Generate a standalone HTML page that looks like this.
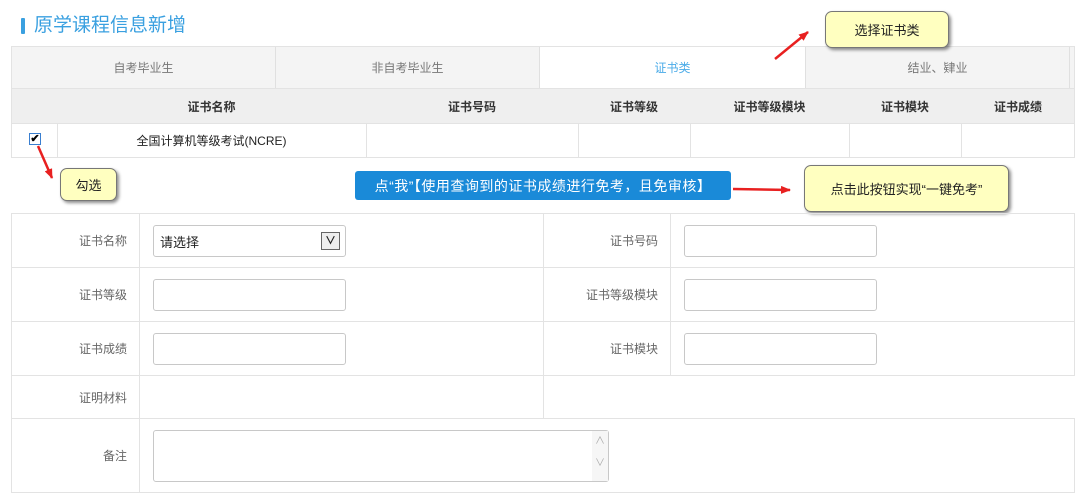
<!DOCTYPE html>
<html><head><meta charset="utf-8"><style>
*{margin:0;padding:0;box-sizing:border-box}
body{width:1085px;height:504px;background:#fff;font-family:"Liberation Sans","Noto Sans CJK SC",sans-serif;position:relative;overflow:hidden;color:#333}
.a{position:absolute}
.c{position:absolute;display:flex;align-items:center;justify-content:center;font-size:12px}
.bd{border:1px solid #e3e3e3}
.lbl{position:absolute;font-size:12px;color:#666;text-align:right;display:flex;align-items:center;justify-content:flex-end;padding-right:12px}
.inp{position:absolute;border:1px solid #c8c8c8;border-radius:3px;background:#fff;width:193px;height:32px}
.note{position:absolute;background:#ffffc0;border:1px solid #777;border-radius:7px;box-shadow:2px 2px 3px rgba(0,0,0,.45);font-size:13px;color:#222;display:flex;align-items:center;justify-content:center}
</style></head><body>
<div class="a" style="left:21px;top:18px;width:4px;height:16px;background:#3aa0e0;border-radius:1px"></div>
<div class="a" style="left:34px;top:14px;font-size:19px;color:#3aa0e0;line-height:24px">原学课程信息新增</div>

<div class="a bd" style="left:11px;top:46px;width:1064px;height:43px;background:#f4f4f4"></div>
<div class="c" style="left:12px;top:47px;width:264px;height:41px;color:#777;border-right:1px solid #e0e0e0">自考毕业生</div>
<div class="c" style="left:276px;top:47px;width:264px;height:41px;color:#777;border-right:1px solid #e0e0e0">非自考毕业生</div>
<div class="c" style="left:540px;top:47px;width:265px;height:41px;color:#4aabe8;background:#fff">证书类</div>
<div class="c" style="left:805px;top:47px;width:265px;height:41px;color:#777;border-left:1px solid #e0e0e0;border-right:1px solid #e0e0e0">结业、肄业</div>

<div class="a" style="left:11px;top:88px;width:1064px;height:36px;background:#efefef;border:1px solid #e3e3e3"></div>
<div class="c" style="left:57px;top:88px;width:309px;height:36px;font-weight:bold;color:#333">证书名称</div>
<div class="c" style="left:366px;top:88px;width:212px;height:36px;font-weight:bold">证书号码</div>
<div class="c" style="left:578px;top:88px;width:112px;height:36px;font-weight:bold">证书等级</div>
<div class="c" style="left:690px;top:88px;width:159px;height:36px;font-weight:bold">证书等级模块</div>
<div class="c" style="left:849px;top:88px;width:112px;height:36px;font-weight:bold">证书模块</div>
<div class="c" style="left:961px;top:88px;width:114px;height:36px;font-weight:bold">证书成绩</div>
<div class="a" style="left:11px;top:123px;width:1064px;height:35px;border:1px solid #e3e3e3"></div>
<div class="a" style="left:57px;top:124px;width:1px;height:33px;background:#e3e3e3"></div>
<div class="a" style="left:366px;top:124px;width:1px;height:33px;background:#e3e3e3"></div>
<div class="a" style="left:578px;top:124px;width:1px;height:33px;background:#e3e3e3"></div>
<div class="a" style="left:690px;top:124px;width:1px;height:33px;background:#e3e3e3"></div>
<div class="a" style="left:849px;top:124px;width:1px;height:33px;background:#e3e3e3"></div>
<div class="a" style="left:961px;top:124px;width:1px;height:33px;background:#e3e3e3"></div>
<div class="a" style="left:29px;top:133px;width:12px;height:12px;border:1px solid #3a7fd0;background:#fff;font-size:11px;line-height:10px;text-align:center;font-weight:bold;color:#000">✔</div>
<div class="c" style="left:57px;top:124px;width:309px;height:33px;color:#222">全国计算机等级考试(NCRE)</div>

<div class="c" style="left:355px;top:171px;width:376px;height:29px;background:#1a8ad8;color:#fff;font-size:14px;border-radius:3px;letter-spacing:0.5px">点“我”【使用查询到的证书成绩进行免考，且免审核】</div>

<div class="note" style="left:60px;top:168px;width:57px;height:33px">勾选</div>
<div class="note" style="left:825px;top:11px;width:124px;height:37px">选择证书类</div>
<div class="note" style="left:804px;top:165px;width:205px;height:47px">点击此按钮实现“一键免考”</div>

<svg class="a" style="left:0;top:0" width="1085" height="504">
<defs><marker id="ar" markerWidth="10" markerHeight="8" refX="9" refY="4" orient="auto" markerUnits="userSpaceOnUse"><path d="M0,0 L10,4 L0,8 Z" fill="#e82020"/></marker></defs>
<line x1="775" y1="59" x2="808" y2="32" stroke="#e82020" stroke-width="2.5" marker-end="url(#ar)"/>
<line x1="38" y1="146" x2="52" y2="178" stroke="#e82020" stroke-width="2.5" marker-end="url(#ar)"/>
<line x1="733" y1="189" x2="790" y2="190" stroke="#e82020" stroke-width="2.5" marker-end="url(#ar)"/>
</svg>

<div class="a" style="left:11px;top:213px;width:1064px;height:163px;border:1px solid #e3e3e3;border-bottom:none"></div>
<div class="a" style="left:11px;top:267px;width:1064px;height:1px;background:#e3e3e3"></div>
<div class="a" style="left:11px;top:321px;width:1064px;height:1px;background:#e3e3e3"></div>
<div class="a" style="left:11px;top:375px;width:1064px;height:1px;background:#e3e3e3"></div>
<div class="a" style="left:11px;top:375px;width:533px;height:44px;border:1px solid #e3e3e3;border-top:none"></div>
<div class="a" style="left:11px;top:418px;width:1064px;height:75px;border:1px solid #e3e3e3"></div>
<div class="a" style="left:139px;top:213px;width:1px;height:280px;background:#e3e3e3"></div>
<div class="a" style="left:543px;top:213px;width:1px;height:163px;background:#e3e3e3"></div>
<div class="a" style="left:670px;top:213px;width:1px;height:163px;background:#e3e3e3"></div>

<div class="lbl" style="left:12px;top:214px;width:127px;height:53px">证书名称</div>
<div class="lbl" style="left:12px;top:268px;width:127px;height:53px">证书等级</div>
<div class="lbl" style="left:12px;top:322px;width:127px;height:53px">证书成绩</div>
<div class="lbl" style="left:12px;top:376px;width:127px;height:42px">证明材料</div>
<div class="lbl" style="left:12px;top:419px;width:127px;height:73px">备注</div>
<div class="lbl" style="left:544px;top:214px;width:126px;height:53px">证书号码</div>
<div class="lbl" style="left:544px;top:268px;width:126px;height:53px">证书等级模块</div>
<div class="lbl" style="left:544px;top:322px;width:126px;height:53px">证书模块</div>

<div class="inp" style="left:153px;top:225px;font-size:13px;color:#222;padding:6px 0 0 6px">请选择
<div class="a" style="right:5px;top:6px;width:19px;height:18px;border:1px solid #666;background:#eee;font-size:11px;line-height:16px;text-align:center;font-weight:bold">∨</div></div>
<div class="inp" style="left:153px;top:279px"></div>
<div class="inp" style="left:153px;top:333px"></div>
<div class="inp" style="left:684px;top:225px"></div>
<div class="inp" style="left:684px;top:279px"></div>
<div class="inp" style="left:684px;top:333px"></div>
<div class="inp" style="left:153px;top:430px;width:456px;height:52px">
<div class="a" style="right:0;top:0;width:16px;height:50px;background:#f6f6f6;color:#aaa;font-size:10px;text-align:center;line-height:22px">∧<br>∨</div></div>
</body></html>
